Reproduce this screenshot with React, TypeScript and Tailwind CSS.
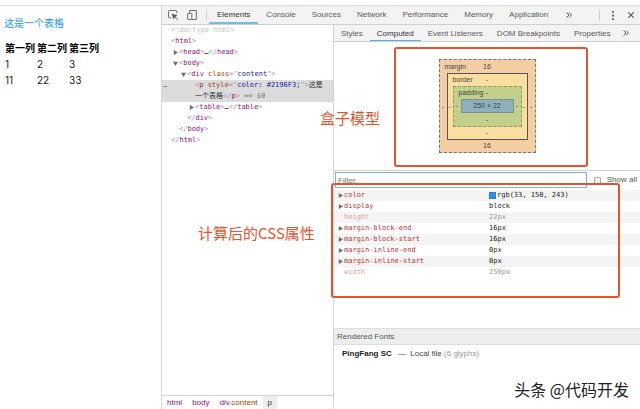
import React, { useState } from "react";

const UI = "font-['Liberation_Sans','Noto_Sans_CJK_SC',sans-serif]";
const MONO = "font-['DejaVu_Sans_Mono','Noto_Sans_CJK_SC',monospace]";
const PAGE = "font-['Inter','Noto_Sans_CJK_SC',sans-serif]";
const CJK = "font-['Noto_Sans_CJK_SC',sans-serif]";

const mainTabs = ["Elements", "Console", "Sources", "Network", "Performance", "Memory", "Application"];
const sideTabs = ["Styles", "Computed", "Event Listeners", "DOM Breakpoints", "Properties"];

type Prop = { name: string; value: string; swatch?: boolean; inherited?: boolean };

const computed: Prop[] = [
  { name: "color", value: "rgb(33, 150, 243)", swatch: true },
  { name: "display", value: "block" },
  { name: "height", value: "22px", inherited: true },
  { name: "margin-block-end", value: "16px" },
  { name: "margin-block-start", value: "16px" },
  { name: "margin-inline-end", value: "0px" },
  { name: "margin-inline-start", value: "0px" },
  { name: "width", value: "250px", inherited: true },
];

function Arrow({ open = false }: { open?: boolean }) {
  return (
    <svg viewBox="0 0 6 6" className="h-[5px] w-[5px] shrink-0 fill-[#6e6e6e]" aria-hidden="true">
      {open ? <path d="M0 1h6L3 6z" /> : <path d="M1 0v6l5-3z" />}
    </svg>
  );
}

function Chevrons() {
  return (
    <svg viewBox="0 0 6 6" className="h-[6px] w-[6px] fill-none stroke-[#5a5a5a]" strokeWidth="1" aria-hidden="true">
      <path d="M.5.5 3 3 .5 5.500M3 .5 5.500 3 3 5.500" />
    </svg>
  );
}

function Tag({ name, close = false, children }: { name: string; close?: boolean; children?: React.ReactNode }) {
  return (
    <span className="text-[#a894a6]">
      &lt;{close && "/"}
      <span className="text-[#881280]">{name}</span>
      {children}&gt;
    </span>
  );
}

function Attr({ name, value }: { name: string; value: string }) {
  return (
    <>
      {" "}
      <span className="text-[#994500]">{name}</span>="<span className="text-[#1a1aa6]">{value}</span>"
    </>
  );
}

// one line of the DOM tree: a 6px arrow gutter, then the markup
function Line({ indent, arrow, children }: { indent: string; arrow?: "open" | "closed"; children: React.ReactNode }) {
  return (
    <div className={`flex h-[11px] items-center ${indent}`}>
      <span className="w-[6px] shrink-0">{arrow && <Arrow open={arrow === "open"} />}</span>
      <span className="whitespace-nowrap">{children}</span>
    </div>
  );
}

function WebPage() {
  return (
    <main className={`w-[162px] shrink-0 border-r border-[#d8d8d8] px-1 pt-[9px] text-[10px] leading-4 text-[#222] ${PAGE}`}>
      <p className="text-[#2196f3]">这是一个表格</p>
      <table className="mt-[9px] border-separate border-spacing-x-px text-left">
        <thead>
          <tr className="text-black">
            <th className="pr-px font-bold">第一列</th>
            <th className="pr-px font-bold">第二列</th>
            <th className="font-bold">第三列</th>
          </tr>
        </thead>
        <tbody>
          <tr>
            <td>1</td>
            <td>2</td>
            <td>3</td>
          </tr>
          <tr>
            <td>11</td>
            <td>22</td>
            <td>33</td>
          </tr>
        </tbody>
      </table>
    </main>
  );
}

function Toolbar() {
  const [active, setActive] = useState("Elements");
  return (
    <div className="flex h-[19px] shrink-0 items-stretch border-b border-[#cfcfcf] bg-[#f3f3f3] text-[8px] text-[#5a5a5a]">
      <button aria-label="Inspect element" className="pl-[6px] pr-[9px]">
        <svg viewBox="0 0 12 12" className="h-[10px] w-[10px] fill-none stroke-[#6e6e6e]" strokeWidth="1.2">
          <path d="M4 9.500H1.600a1 1 0 0 1-1-1V1.600a1 1 0 0 1 1-1h7.900a1 1 0 0 1 1 1V4" />
          <path d="M4.500 4.200 11.400 6.600 8.700 8l3 3-.8.800-3-3-1.300 2.600z" className="fill-[#5a5a5a] stroke-none" />
        </svg>
      </button>
      <button aria-label="Toggle device toolbar" className="pr-[9px]">
        <svg viewBox="0 0 12 12" className="h-[10px] w-[10px] fill-none stroke-[#6e6e6e]" strokeWidth="1.2">
          <path d="M3 3.500V.6h8.200v10.800H6" />
          <rect x=".8" y="4" width="5" height="7.400" rx=".5" />
        </svg>
      </button>
      <span className="my-1 mr-[2px] w-px bg-[#ccc]" />
      <nav className="flex">
        {mainTabs.map((t) => (
          <button
            key={t}
            onClick={() => setActive(t)}
            className={`border-b-2 px-2 pt-0.5 ${t === active ? "border-[#6cc0e5] text-[#333]" : "border-transparent"}`}
          >
            {t}
          </button>
        ))}
      </nav>
      <button aria-label="More tabs" className="px-[10px]">
        <Chevrons />
      </button>
      <span className="my-1 ml-auto w-px bg-[#ccc]" />
      <button aria-label="Customize DevTools" className="pl-3 pr-[14px]">
        <svg viewBox="0 0 2 10" className="h-[9px] w-[2px] fill-[#5a5a5a]">
          <path d="M0 0h2v2H0zM0 4h2v2H0zM0 8h2v2H0z" />
        </svg>
      </button>
      <button aria-label="Close" className="pr-[6px]">
        <svg viewBox="0 0 6 6" className="h-[6px] w-[6px] fill-none stroke-[#5a5a5a]" strokeWidth="1.200">
          <path d="m.3.3 5.400 5.400M5.700.3.3 5.700" />
        </svg>
      </button>
    </div>
  );
}

function DomTree() {
  return (
    <section className="relative flex w-[172px] shrink-0 flex-col border-r border-[#d4d4d4]">
      <div className={`flex-1 text-[7px] ${MONO}`}>
        <Line indent="pl-[3px]">
          <span className="text-[#c0c0c0]">&lt;!doctype html&gt;</span>
        </Line>
        <Line indent="pl-[3px]">
          <Tag name="html" />
        </Line>
        <Line indent="pl-[11px]" arrow="closed">
          <Tag name="head" />…<Tag name="head" close />
        </Line>
        <Line indent="pl-[11px]" arrow="open">
          <Tag name="body" />
        </Line>
        <Line indent="pl-[19px]" arrow="open">
          <Tag name="div">
            <Attr name="class" value="content" />
          </Tag>
        </Line>
        <div className="flex bg-[#dcdcdc] leading-[11px] text-[#333]">
          <span className="w-[33px] shrink-0 pl-px text-[#666]">…</span>
          <div className="whitespace-nowrap">
            <div>
              <Tag name="p">
                <Attr name="style" value="color: #2196F3;" />
              </Tag>
              <span>这是</span>
            </div>
            <div>
              <span>一个表格</span>
              <Tag name="p" close />
              <span className="text-[#777]">
                {" "}
                == <i>$0</i>
              </span>
            </div>
          </div>
        </div>
        <Line indent="pl-[27px]" arrow="closed">
          <Tag name="table" />…<Tag name="table" close />
        </Line>
        <Line indent="pl-[19px]">
          <Tag name="div" close />
        </Line>
        <Line indent="pl-[11px]">
          <Tag name="body" close />
        </Line>
        <Line indent="pl-[3px]">
          <Tag name="html" close />
        </Line>
      </div>
      <div className="flex h-[14px] border-t border-[#d4d4d4] text-[8px] leading-[14px] text-[#881280]">
        <a href="#html" className="px-[5px]">html</a>
        <a href="#body" className="px-[5px]">body</a>
        <a href="#content" className="px-[5px]">
          div<span className="text-[#994500]">.content</span>
        </a>
        <a href="#p" className="bg-[#ededed] px-[5px] text-[#333]">p</a>
      </div>
      <Note className="left-9 top-[198px]">计算后的CSS属性</Note>
      <Note className="left-[158px] top-[83px]">盒子模型</Note>
    </section>
  );
}

function Note({ className, children }: { className: string; children: React.ReactNode }) {
  return (
    <span className={`absolute z-10 whitespace-nowrap text-[15px] leading-5 text-[#e8532f] ${CJK} ${className}`}>
      {children}
    </span>
  );
}

function Ring({
  label,
  value,
  className,
  top,
  side,
  bottom,
  children,
}: {
  label: string;
  value: string;
  className: string;
  top: string;
  side: string;
  bottom: string;
  children: React.ReactNode;
}) {
  return (
    <div className={`w-full border ${className}`}>
      <div className={`grid grid-cols-[1fr_auto_1fr] items-center ${top}`}>
        <span className="w-0 whitespace-nowrap pl-[5px]">{label}</span>
        <span>{value}</span>
      </div>
      <div className="flex items-center">
        <span className={`shrink-0 text-center ${side}`}>-</span>
        {children}
        <span className={`shrink-0 text-center ${side}`}>-</span>
      </div>
      <div className={`flex items-center justify-center ${bottom}`}>{value}</div>
    </div>
  );
}

function BoxModel() {
  return (
    <div className="relative flex h-[129px] shrink-0 justify-center border-b border-[#d4d4d4] pt-[17px]">
      <div className="w-[97px] text-[7px] leading-[8px] text-[#444]">
        <Ring label="margin" value="16" top="h-[13px]" side="w-[7px]" bottom="h-3" className="border-dashed border-[#777] bg-[#f4cda2]">
          <Ring label="border" value="-" top="h-3" side="w-[5px]" bottom="h-3" className="border-[#555] bg-[#fbdea0]">
            <Ring label="padding" value="-" top="h-3" side="w-[7px]" bottom="h-[13px]" className="border-dashed border-[#8a9a68] bg-[#c3d08b]">
              <div className="h-[14px] flex-1 whitespace-nowrap border border-[#7d8f92] bg-[#8cb1bd] text-center leading-3">250 × 22</div>
            </Ring>
          </Ring>
        </Ring>
      </div>
      <div className="pointer-events-none absolute bottom-[3px] left-[60px] right-[52px] top-[5px] rounded-[3px] border-2 border-[#e8532f]" />
    </div>
  );
}

function Sidebar() {
  const [active, setActive] = useState("Computed");
  return (
    <aside className="flex min-w-0 flex-1 flex-col">
      <div className="flex h-[17px] shrink-0 border-b border-[#d0d0d0] bg-[#f3f3f3] text-[8px] text-[#5a5a5a]">
        {sideTabs.map((t) => (
          <button
            key={t}
            onClick={() => setActive(t)}
            className={`whitespace-nowrap border-b px-[7px] pt-0.5 ${t === active ? "border-[#5aaee8] text-[#333]" : "border-transparent"}`}
          >
            {t}
          </button>
        ))}
        <button aria-label="More panes" className="px-[6px]">
          <Chevrons />
        </button>
      </div>
      <BoxModel />
      <div className="relative h-[157px] shrink-0">
        <div className="flex h-[19px] items-start gap-[7px] pl-px pr-[3px] pt-px text-[8px] text-[#555]">
          <input
            type="text"
            aria-label="Filter"
            placeholder="Filter"
            className="h-4 min-w-0 flex-1 border border-[#7db4e6] px-[2px] placeholder:text-[#757575]"
          />
          <label className="flex h-4 items-center gap-[6px] whitespace-nowrap">
            <input type="checkbox" className="h-[7px] w-[7px] appearance-none rounded-[1px] border border-[#aaa] bg-[#f5f5f5]" />
            Show all
          </label>
        </div>
        <table className={`w-full table-fixed text-left text-[7px] leading-[11px] ${MONO}`}>
          <tbody>
            {computed.map((p) => (
              <tr key={p.name} className="h-[11px] odd:bg-[#f4f4f4]">
                <th scope="row" className={`p-0 font-normal ${p.inherited ? "text-[#e0a0a0]" : "text-[#c03030]"}`}>
                  <span className="flex items-center pl-1">
                    <span className="w-[6px]">{!p.inherited && <Arrow />}</span>
                    {p.name}
                  </span>
                </th>
                <td className={`p-0 ${p.inherited ? "text-[#999]" : "text-[#222]"}`}>
                  <span className="flex items-center gap-px pl-[2px]">
                    {p.swatch && <span className="h-[7px] w-[7px] border border-[#3a78c4] bg-[#2196f3]" />}
                    {p.value}
                  </span>
                </td>
              </tr>
            ))}
          </tbody>
        </table>
        <div className="pointer-events-none absolute -left-[3px] bottom-[30px] right-5 top-3 z-10 rounded-[3px] border-2 border-[#e8532f]" />
      </div>
      <h2 className="h-[17px] border-y border-[#ddd] bg-[#eee] pl-[3px] text-[8px] leading-4 text-[#555]">Rendered Fonts</h2>
      <p className="pl-2 pt-1 text-[8px] leading-[10px] text-[#444]">
        <b className="pr-1 text-[#222]">PingFang SC</b> — <span className="pl-[2px]">Local file</span>{" "}
        <span className="text-[#999]">(6 glyphs)</span>
      </p>
      <div className={`mt-auto self-end whitespace-nowrap pb-[8px] pr-[11px] text-[16px] leading-6 text-[#222] ${CJK}`}>
        头条 @代码开发
      </div>
    </aside>
  );
}

export default function App() {
  return (
    <div className={`flex min-h-screen flex-col bg-white pt-[5px] ${UI}`}>
      <div className="flex flex-1 border-t border-[#dcdcdc]">
        <WebPage />
        <div className="flex min-w-0 flex-1 flex-col">
          <Toolbar />
          <div className="flex flex-1">
            <DomTree />
            <Sidebar />
          </div>
        </div>
      </div>
    </div>
  );
}
